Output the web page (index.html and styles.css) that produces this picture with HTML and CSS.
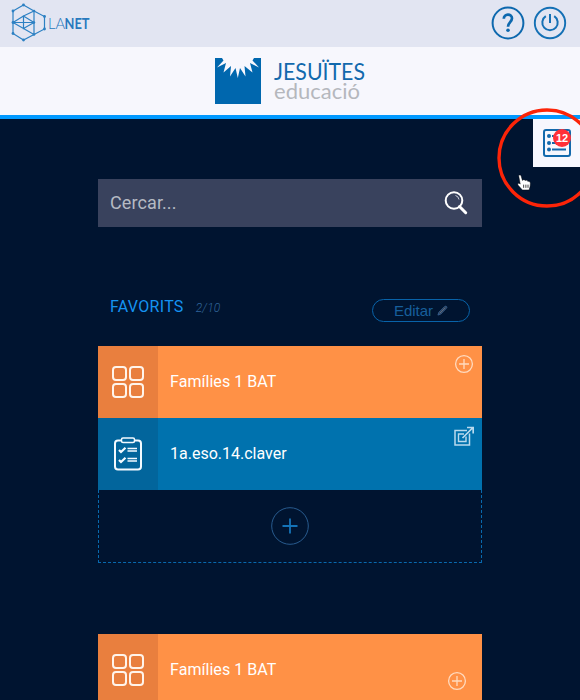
FILE: index.html
```html
<!DOCTYPE html>
<html lang="ca">
<head>
<meta charset="utf-8">
<title>LANET</title>
<link rel="stylesheet" href="styles.css">
</head>
<body>
<svg class="defs" aria-hidden="true">
  <symbol id="grid" viewBox="0 0 34 34">
    <g fill="none" stroke="#fff4eb" stroke-width="2"><rect x="2" y="2" width="13" height="13" rx="3"/><rect x="19" y="2" width="13" height="13" rx="3"/><rect x="2" y="19" width="13" height="13" rx="3"/><rect x="19" y="19" width="13" height="13" rx="3"/></g>
  </symbol>
  <symbol id="plus" viewBox="0 0 20 20">
    <g fill="none" stroke="#ffdabf" stroke-width="1.3"><circle cx="10" cy="10" r="8.4"/><path d="M10 5v10M5 10h10"/></g>
  </symbol>
</svg>
<header class="topbar">
  <svg class="lanet" viewBox="0 0 84 40">
    <g fill="none" stroke="#2c80c3" stroke-width="1.2">
      <path d="M13.500 2L24 8L34.500 13.500V26L24 31.500L13.500 37L3 30.500V8Z"/>
      <path d="M24 8V31.500M3 19.500L13.500 13L24 8M3 19.500L13.500 25.500L24 31.500M13.500 13V25.500L24 19.500ZM3 19.500H24"/>
    </g>
    <g fill="#2c80c3"><circle cx="13.500" cy="2" r="1.400"/><circle cx="24" cy="8" r="1.300"/><circle cx="34.500" cy="13.500" r="1.400"/><circle cx="34.500" cy="26" r="1.400"/><circle cx="24" cy="31.500" r="1.300"/><circle cx="13.500" cy="37" r="1.400"/><circle cx="3" cy="30.500" r="1.400"/><circle cx="3" cy="19.500" r="1.400"/><circle cx="3" cy="8" r="1.400"/><circle cx="24" cy="19.500" r="1.200"/></g>
    <text class="la" x="38" y="26" textLength="17" lengthAdjust="spacingAndGlyphs">LA</text>
    <text class="net" x="54.500" y="26" textLength="25" lengthAdjust="spacingAndGlyphs">NET</text>
  </svg>
  <nav class="actions">
    <svg viewBox="0 0 34 34"><g fill="none" stroke="#0d68ae"><circle cx="17" cy="17" r="15.400" stroke-width="2"/><path d="M12.800 12.800C12.800 7.200 21 7.200 21 12.300C21 16 17 16.300 17 20.800" stroke-width="2.700"/></g><circle cx="17" cy="24.300" r="1.800" fill="#0d68ae"/></svg>
    <svg viewBox="0 0 34 34"><g fill="none" stroke="#1470b5"><circle cx="17" cy="17" r="15.200" stroke-width="1.900"/><path d="M17 8V17M12.800 10.200A7.700 7.700 0 1 0 21.200 10.200" stroke-width="2"/></g></svg>
  </nav>
</header>
<div class="brand">
  <svg viewBox="0 0 152 46">
    <rect x="1" width="46" height="46" fill="#0067ae"/>
    <path fill="#f7f7fd" d="M8 0H40L38.500 2.500L45 9.500L36 5L38.500 14.500L30.500 8L31.500 18.500L26 10L23.800 20L21.500 10L16 18.500L17 8L9.500 14.500L12 5L3 9.500L9.500 2.500Z"/>
    <text class="jes" x="60" y="22" textLength="91" lengthAdjust="spacingAndGlyphs">JESUÏTES</text>
    <text class="edu" x="60" y="41" textLength="86" lengthAdjust="spacingAndGlyphs">educació</text>
  </svg>
</div>
<aside class="tasks">
  <svg class="list" viewBox="0 0 30 30"><rect x="2" y="2" width="26" height="26" rx="2" fill="none" stroke="#1269ac" stroke-width="2"/><path d="M10 8H24M10 15H24M10 21.500H24" stroke="#1269ac" stroke-width="1.900"/><g fill="#1269ac"><circle cx="7" cy="8" r="2"/><circle cx="7" cy="15" r="2"/><circle cx="7" cy="21.500" r="2"/></g></svg>
  <span class="badge">12</span>
</aside>
<svg class="ring" viewBox="0 0 84 100"><circle cx="51" cy="50" r="48" fill="none" stroke="#fc2408" stroke-width="3.400"/></svg>
<svg class="cursor" viewBox="0 0 14 16"><path d="M1.500 1.500C2.500 .4 3.800 1 4 2.500L5 6C6 5 7.200 5.200 7.700 6.200C8.800 5.400 9.800 6 10.200 7C11.500 6.500 12.500 7.500 12.500 9L12.300 11.500L11.300 15H5L1 10.500C0 9 1.500 8 3 9.500Z" fill="#fff" stroke="#000" stroke-width=".4"/><path d="M6.200 10V13M8.300 10V13M10.300 10V13" stroke="#222" stroke-width=".8"/></svg>
<main class="content">
  <div class="search">
    <span>Cercar...</span>
    <svg viewBox="0 0 24 26"><circle cx="10" cy="10.500" r="8.300" fill="none" stroke="#fff" stroke-width="2"/><path d="M11.500 5.500Q14.500 6.300 15 9.500" fill="none" stroke="#ccd0dc"/><path d="M15.500 16.500L21.700 22.700" stroke="#fff" stroke-width="3" stroke-linecap="round"/></svg>
  </div>
  <div class="heading">
    <h2>FAVORITS</h2><em>2/10</em>
    <button class="edit">Editar
      <svg viewBox="0 0 12 12"><path d="M1 11L2 8L8.500 1.500Q10 .8 10.700 2Q11 2.900 10.300 3.500L4 10Z" fill="#31415a" stroke="#386493" stroke-width=".9"/><path d="M3 9L9 3" stroke="#718095" stroke-width=".7"/></svg>
    </button>
  </div>
  <section class="favorites">
    <article class="card orange">
      <div class="side"><svg><use href="#grid"/></svg></div>
      <span class="title">Famílies 1 BAT</span>
      <svg class="corner"><use href="#plus"/></svg>
    </article>
    <article class="card blue">
      <div class="side"><svg viewBox="0 0 34 34"><g fill="none" stroke="#f3faff" stroke-width="2"><path d="M10 3.500H7Q4 3.500 4 6.500V29.500Q4 32.500 7 32.500H27Q30 32.500 30 29.500V6.500Q30 3.500 27 3.500H24"/><rect x="10.500" y="1" width="13" height="4.500" rx="1.500" stroke-width="1.500"/><path d="M16.500 11.500H26M16.500 14H26M16.500 21.500H26M16.500 24H26" stroke-width="1.400"/><path d="M8 13L10 15L14.500 10.700M8 23L10 25L14.500 20.700" stroke-width="2.200"/></g></svg></div>
      <span class="title">1a.eso.14.claver</span>
      <svg class="corner" viewBox="0 0 20 20"><g fill="none" stroke="#b9daee"><path d="M13 4.500H1V19H15.500V7.500" stroke-width="1.500"/><path d="M10 8H4.500V15.500H12V10.500" stroke-width="1.400"/><path d="M8.500 12L18.500 2M13 1.500H19.200V7.500" stroke-width="1.700"/></g></svg>
    </article>
    <div class="empty"><svg viewBox="0 0 38 38"><circle cx="19" cy="19" r="18.300" fill="none" stroke="#285b8e"/><path d="M19 11.500V26.500M11.500 19H26.500" stroke="#1473b7" stroke-width="1.800"/></svg></div>
  </section>
  <article class="card orange">
    <div class="side"><svg><use href="#grid"/></svg></div>
    <span class="title">Famílies 1 BAT</span>
    <svg class="corner low"><use href="#plus"/></svg>
  </article>
</main>
</body>
</html>
```
FILE: styles.css
```css
* { box-sizing: border-box; }
html { overflow: hidden; background: #001430; }
body { margin: 0; height: 700px; overflow: hidden; position: relative; background: #001430; font-family: Roboto, sans-serif; }
svg { display: block; flex: none; }
.defs { position: absolute; width: 0; height: 0; }
.topbar { height: 47px; background: #e2e5f2; display: flex; justify-content: space-between; padding: 3px 13px 0 10px; }
.lanet { width: 84px; height: 40px; overflow: visible; }
.lanet text { font-family: Lato, sans-serif; font-size: 16px; fill: #2879be; }
.lanet .la { font-weight: 300; }
.lanet .net { font-weight: 700; }
.actions { display: flex; gap: 8px; padding-top: 3px; }
.actions svg { width: 34px; height: 34px; }
.brand { height: 72px; background: #f7f7fd; border-bottom: 4px solid #0099ff; padding-top: 11px; display: flex; justify-content: center; }
.brand svg { width: 152px; height: 46px; overflow: visible; }
.jes { font: 23px Lato, sans-serif; fill: #1269ad; }
.edu { font: 22px Lato, sans-serif; fill: #b5b7bd; }
.tasks { position: absolute; top: 119px; right: 0; width: 47px; height: 48px; background: #f7f7fd; padding: 9px; }
.list { width: 30px; height: 30px; }
.badge { position: absolute; top: 10px; left: 20px; width: 18px; height: 18px; border-radius: 50%; background: #ff3038; color: #fff; font: bold 11px/18px "Liberation Sans", sans-serif; text-align: center; }
.ring { position: absolute; top: 108px; right: 0; width: 84px; height: 100px; overflow: visible; }
.cursor { position: absolute; top: 174px; left: 517px; width: 15px; height: 17px; }
.content { width: 384px; margin: 60px auto 0 98px; }
.search { height: 48px; background: #39425d; display: flex; align-items: center; justify-content: space-between; padding: 0 14px 0 12px; color: #b5bac3; font-size: 18px; }
.search span { margin-top: -1px; letter-spacing: .1px; }
.search svg { width: 24px; height: 26px; }
.heading { height: 24px; margin: 71px 12px 24px; display: flex; align-items: center; }
h2 { margin: -8px 0 0; font-size: 16px; font-weight: 400; color: #1593f2; letter-spacing: .3px; }
em { margin: -5px 0 0 12px; color: #30659a; font-size: 12px; font-weight: 300; letter-spacing: .2px; }
.edit { margin-left: auto; width: 98px; height: 23px; border: 1px solid #0863a9; border-radius: 12px; background: none; padding: 0; display: flex; gap: 4px; align-items: center; justify-content: center; color: #175f9b; font: 300 15px "Liberation Sans", sans-serif; }
.edit svg { width: 11px; height: 11px; }
.favorites { height: 217px; margin-bottom: 71px; }
.card { height: 72px; display: flex; align-items: center; position: relative; color: #fff; }
.side { width: 60px; height: 100%; display: flex; align-items: center; justify-content: center; }
.side svg { width: 34px; height: 34px; }
.title { margin: -2px 0 0 12px; font-size: 16px; letter-spacing: .05px; }
.orange { background: #ff9146; }
.orange .side { background: #e97f3e; }
.blue { background: #0072ae; }
.blue .side { background: #02659c; }
.blue .title { letter-spacing: 0; }
.corner { position: absolute; top: 8px; right: 8px; width: 20px; height: 20px; }
.corner.low { top: 37px; right: 15px; }
.empty { height: 73px; border: 1px dashed #0869ae; border-top: 0; display: flex; align-items: center; justify-content: center; }
.empty svg { width: 38px; height: 38px; }
```
